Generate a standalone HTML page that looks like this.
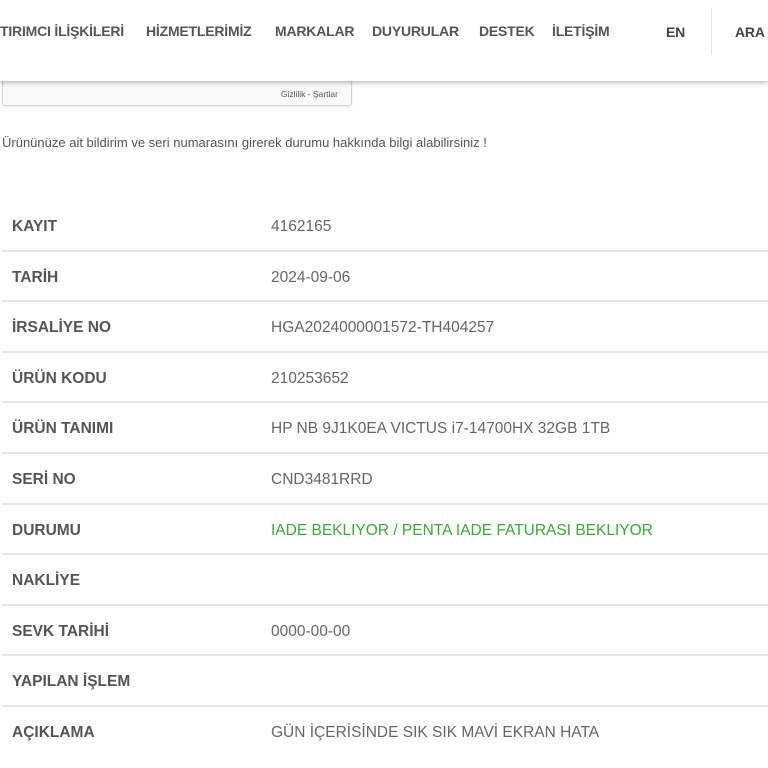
<!DOCTYPE html>
<html><head><meta charset="utf-8"><style>
*{margin:0;padding:0;box-sizing:border-box}
body{width:768px;height:768px;overflow:hidden;background:#fff;font-family:"Liberation Sans",sans-serif;color:#555;position:relative}
.hdr{position:absolute;left:0;top:0;width:768px;height:81px;background:#fff;box-shadow:0 2px 4px rgba(0,0,0,.25);z-index:2}
.nav{position:absolute;top:23px;font-size:14px;font-weight:bold;color:#555;white-space:nowrap;letter-spacing:-0.2px}
.sep{position:absolute;left:711px;top:8px;width:1px;height:47px;background:#e3e3e3}
.cap{position:absolute;left:2px;top:60px;width:350px;height:46px;background:#f9f9f9;border:1px solid #d3d3d3;border-radius:3px;box-shadow:0 1px 2px rgba(0,0,0,.1)}
.cap span{position:absolute;right:13px;top:28px;font-size:8.5px;color:#555}
.intro{position:absolute;left:2px;top:135px;font-size:13px;color:#555}
.row{position:absolute;left:2px;width:766px;height:50.6px;border-bottom:2px solid #e6e6e6}
.row b{position:absolute;left:10px;top:17px;font-size:15.5px;color:#555}
.row i{position:absolute;left:269px;top:17px;font-size:15.5px;font-style:normal;color:#666}
.row i.g{color:#3aa83a}
</style></head><body>
<div class="hdr">
<div class="nav" style="left:0">TIRIMCI İLİŞKİLERİ</div>
<div class="nav" style="left:146px">HİZMETLERİMİZ</div>
<div class="nav" style="left:275px">MARKALAR</div>
<div class="nav" style="left:372px">DUYURULAR</div>
<div class="nav" style="left:479px">DESTEK</div>
<div class="nav" style="left:552px">İLETİŞİM</div>
<div class="nav" style="left:666px;top:24px;color:#444">EN</div>
<div class="sep"></div>
<div class="nav" style="left:735px;top:24px;color:#444">ARA</div>
</div>
<div class="cap"><span>Gizlilik - Şartlar</span></div>
<div class="intro">Ürününüze ait bildirim ve seri numarasını girerek durumu hakkında bilgi alabilirsiniz !</div>
<div class="row" style="top:201px"><b>KAYIT</b><i>4162165</i></div>
<div class="row" style="top:251.6px"><b>TARİH</b><i>2024-09-06</i></div>
<div class="row" style="top:302.2px"><b>İRSALİYE NO</b><i>HGA2024000001572-TH404257</i></div>
<div class="row" style="top:352.8px"><b>ÜRÜN KODU</b><i>210253652</i></div>
<div class="row" style="top:403.4px"><b>ÜRÜN TANIMI</b><i>HP NB 9J1K0EA VICTUS i7-14700HX 32GB 1TB</i></div>
<div class="row" style="top:454px"><b>SERİ NO</b><i>CND3481RRD</i></div>
<div class="row" style="top:504.6px"><b>DURUMU</b><i class="g">IADE BEKLIYOR / PENTA IADE FATURASI BEKLIYOR</i></div>
<div class="row" style="top:555.2px"><b>NAKLİYE</b></div>
<div class="row" style="top:605.8px"><b>SEVK TARİHİ</b><i>0000-00-00</i></div>
<div class="row" style="top:656.4px"><b>YAPILAN İŞLEM</b></div>
<div class="row" style="top:707px;border:none"><b>AÇIKLAMA</b><i>GÜN İÇERİSİNDE SIK SIK MAVİ EKRAN HATA</i></div>
</body></html>
